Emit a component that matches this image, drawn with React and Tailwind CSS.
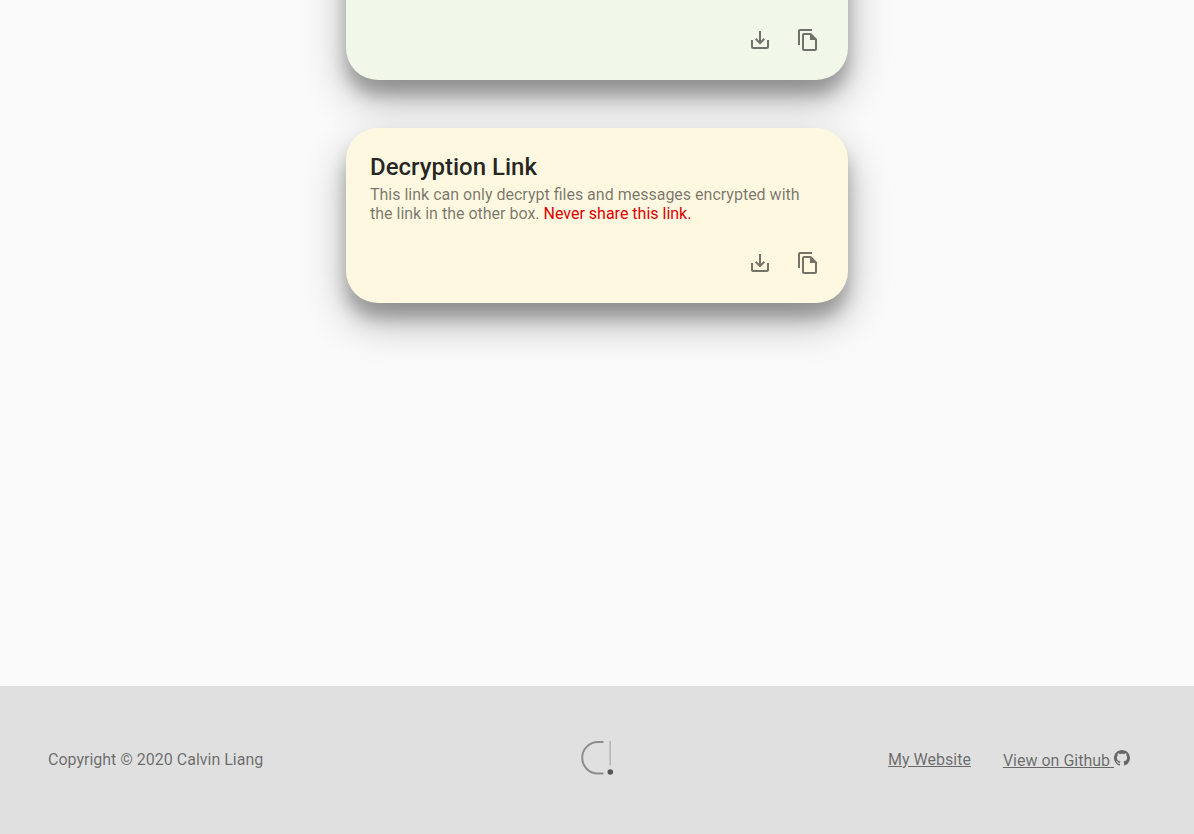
import React from "react";

function SaveIcon() {
  return (
    <svg viewBox="0 0 24 24" className="size-6" fill="currentColor" aria-hidden="true">
      <path d="M19 12v7H5v-7H3v7c0 1.1.9 2 2 2h14c1.1 0 2-.9 2-2v-7h-2zm-6 .67l2.59-2.58L17 11.5l-5 5-5-5 1.41-1.41L11 12.67V3h2v9.67z" />
    </svg>
  );
}

function CopyIcon() {
  return (
    <svg viewBox="0 0 24 24" className="size-6" fill="currentColor" aria-hidden="true">
      <path d="M16 1H4c-1.1 0-2 .9-2 2v14h2V3h12V1zm-1 4H8c-1.1 0-1.99.9-1.99 2L6 21c0 1.1.89 2 1.99 2H19c1.1 0 2-.9 2-2V11l-6-6zM8 21V7h6v5h5v9H8z" />
    </svg>
  );
}

function GithubIcon() {
  return (
    <svg viewBox="0 0 16 16" className="inline-block size-4 align-baseline" fill="currentColor" aria-hidden="true">
      <path d="M8 0C3.58 0 0 3.58 0 8c0 3.54 2.29 6.53 5.47 7.59.4.07.55-.17.55-.38 0-.19-.01-.82-.01-1.49-2.01.37-2.53-.49-2.69-.94-.09-.23-.48-.94-.82-1.13-.28-.15-.68-.52-.01-.53.63-.01 1.08.58 1.23.82.72 1.21 1.87.87 2.33.66.07-.52.28-.87.51-1.07-1.78-.2-3.64-.89-3.64-3.95 0-.87.31-1.59.82-2.15-.08-.2-.36-1.02.08-2.12 0 0 .67-.21 2.2.82.64-.18 1.32-.27 2-.27s1.36.09 2 .27c1.53-1.04 2.2-.82 2.2-.82.44 1.1.16 1.92.08 2.12.51.56.82 1.27.82 2.15 0 3.07-1.87 3.75-3.65 3.95.29.25.54.73.54 1.48 0 1.07-.01 1.93-.01 2.2 0 .21.15.46.55.38A8.01 8.01 0 0 0 16 8c0-4.42-3.58-8-8-8z" />
    </svg>
  );
}

function Logo() {
  return (
    <svg viewBox="0 0 34 36" className="mb-1 h-9 w-[34px]" fill="none" aria-hidden="true">
      <path d="M23.5 2H18a15.8 15.8 0 0 0 0 31.6h5.5" stroke="#8c8c8c" strokeWidth="2" />
      <path d="M30.2 1v24.5" stroke="#b6b6b6" strokeWidth="1.6" />
      <circle cx="30.3" cy="32" r="2.8" fill="#555555" />
    </svg>
  );
}

function Actions() {
  return (
    <div className="flex justify-end text-black/54">
      <button className="flex size-12 items-center justify-center" aria-label="Download">
        <SaveIcon />
      </button>
      <button className="flex size-12 items-center justify-center" aria-label="Copy">
        <CopyIcon />
      </button>
    </div>
  );
}

const cardShadow = "shadow-[0_19px_40px_rgba(0,0,0,0.3),0_15px_16px_rgba(0,0,0,0.22)]";

export default function App() {
  return (
    <div className="flex h-[834px] flex-col overflow-hidden bg-[#fafafa] font-['Roboto',sans-serif] text-base text-black/54">
      <main className="flex flex-1 flex-col items-center gap-12">
        <section
          className={`-mt-24 flex h-44 w-[502px] shrink-0 flex-col justify-end rounded-[32px] bg-[#f1f8e9] px-4 pb-4 ${cardShadow}`}
        >
          <Actions />
        </section>
        <section
          className={`flex h-[175px] w-[502px] shrink-0 flex-col justify-between rounded-[32px] bg-[#fff8e1] px-4 pb-4 pt-[23px] ${cardShadow}`}
        >
          <div className="px-2">
            <h2 className="mb-0.5 text-2xl leading-8 font-medium text-black/87">Decryption Link</h2>
            <p className="leading-[19px]">
              This link can only decrypt files and messages encrypted with
              <br />
              the link in the other box. <span className="text-[#dd0000]">Never share this link.</span>
            </p>
          </div>
          <Actions />
        </section>
      </main>
      <footer className="grid h-[148px] shrink-0 grid-cols-[1fr_34px_1fr] items-center bg-[#e0e0e0] px-12">
        <span>Copyright © 2020 Calvin Liang</span>
        <Logo />
        <div className="flex items-center justify-end gap-8 pr-4">
          <a href="#" className="underline">My Website</a>
          <a href="#" className="pt-0.5 whitespace-nowrap underline">
            View on Github <GithubIcon />
          </a>
        </div>
      </footer>
    </div>
  );
}
